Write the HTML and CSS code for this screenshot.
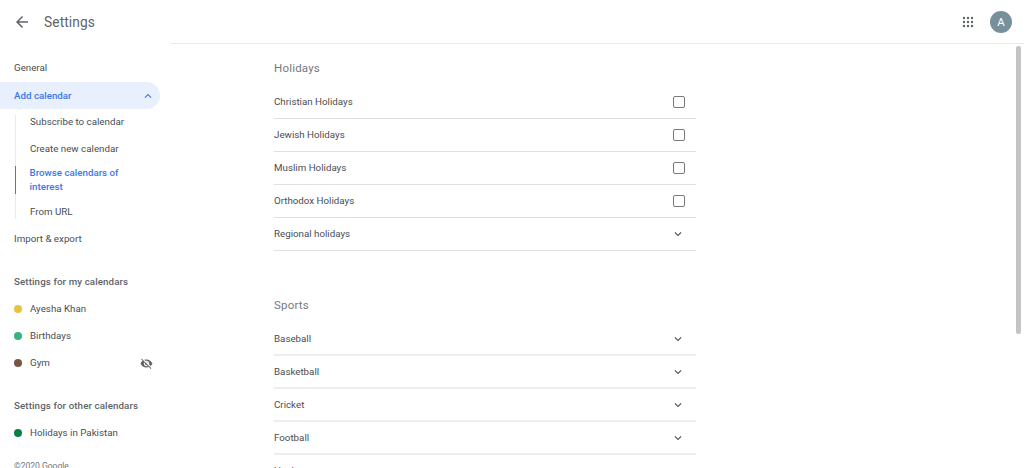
FILE: index.html
```html
<!DOCTYPE html>
<html lang="en">
<head>
<meta charset="utf-8">
<title>Settings</title>
<link rel="stylesheet" href="styles.css">
</head>
<body>
<div class="shell">
  <aside class="sidebar">
    <div class="title-row">
      <svg class="back" viewBox="0 0 24 24" width="18" height="18"><path d="M20 11H7.83l5.59-5.59L12 4l-8 8 8 8 1.41-1.41L7.83 13H20v-2z"/></svg>
      <span class="title">Settings</span>
    </div>
    <nav class="nav">
      <div class="nav-item">General</div>
      <div class="nav-item active">
        <span>Add calendar</span>
        <svg class="caret" viewBox="0 0 24 24" width="14" height="14"><path d="M7.41 15.41 12 10.83l4.59 4.58L18 14l-6-6-6 6z"/></svg>
      </div>
      <div class="sub">
        <div class="sub-item">Subscribe to calendar</div>
        <div class="sub-item">Create new calendar</div>
        <div class="sub-item current">Browse calendars of interest</div>
        <div class="sub-item">From URL</div>
      </div>
      <div class="nav-item">Import &amp; export</div>
      <div class="nav-head">Settings for my calendars</div>
      <div class="nav-item cal"><i class="dot yellow"></i><span>Ayesha Khan</span></div>
      <div class="nav-item cal"><i class="dot green"></i><span>Birthdays</span></div>
      <div class="nav-item cal">
        <i class="dot brown"></i><span>Gym</span>
        <svg class="eye" viewBox="0 0 24 24" width="13" height="13"><path d="M12 7c2.76 0 5 2.24 5 5 0 .65-.13 1.26-.36 1.83l2.92 2.92c1.51-1.26 2.7-2.89 3.43-4.75-1.73-4.39-6-7.5-11-7.5-1.4 0-2.74.25-3.98.7l2.16 2.16C10.74 7.13 11.35 7 12 7zM2 4.27l2.28 2.28.46.46C3.08 8.3 1.78 10.02 1 12c1.73 4.39 6 7.5 11 7.5 1.55 0 3.03-.3 4.38-.84l.42.42L19.73 22 21 20.73 3.27 3 2 4.27zM7.53 9.8l1.55 1.55c-.05.21-.08.43-.08.65 0 1.66 1.34 3 3 3 .22 0 .44-.03.65-.08l1.55 1.55c-.67.33-1.41.53-2.2.53-2.76 0-5-2.24-5-5 0-.79.2-1.53.53-2.2zm4.31-.78l3.15 3.15.02-.16c0-1.66-1.34-3-3-3l-.17.01z"/></svg>
      </div>
      <div class="nav-head">Settings for other calendars</div>
      <div class="nav-item cal"><i class="dot forest"></i><span>Holidays in Pakistan</span></div>
      <div class="copy">©2020 Google</div>
    </nav>
  </aside>
  <main class="main">
    <header class="topbar">
      <svg class="apps" viewBox="0 0 12 12" width="12" height="12"><g><circle cx="2" cy="2" r="1.2"/><circle cx="6" cy="2" r="1.2"/><circle cx="10" cy="2" r="1.2"/><circle cx="2" cy="6" r="1.2"/><circle cx="6" cy="6" r="1.2"/><circle cx="10" cy="6" r="1.2"/><circle cx="2" cy="10" r="1.2"/><circle cx="6" cy="10" r="1.2"/><circle cx="10" cy="10" r="1.2"/></g></svg>
      <div class="avatar">A</div>
    </header>
    <div class="content">
      <section class="group">
        <h2 class="group-title">Holidays</h2>
        <div class="row"><span>Christian Holidays</span><i class="check"></i></div>
        <div class="row"><span>Jewish Holidays</span><i class="check"></i></div>
        <div class="row"><span>Muslim Holidays</span><i class="check"></i></div>
        <div class="row"><span>Orthodox Holidays</span><i class="check"></i></div>
        <div class="row"><span>Regional holidays</span><svg class="chev" viewBox="0 0 24 24" width="14" height="14"><path d="M7.410 8.590 12 13.170l4.590-4.580L18 10l-6 6-6-6z"/></svg></div>
      </section>
      <section class="group soft">
        <h2 class="group-title">Sports</h2>
        <div class="row"><span>Baseball</span><svg class="chev" viewBox="0 0 24 24" width="14" height="14"><path d="M7.410 8.590 12 13.170l4.590-4.580L18 10l-6 6-6-6z"/></svg></div>
        <div class="row"><span>Basketball</span><svg class="chev" viewBox="0 0 24 24" width="14" height="14"><path d="M7.410 8.590 12 13.170l4.590-4.580L18 10l-6 6-6-6z"/></svg></div>
        <div class="row"><span>Cricket</span><svg class="chev" viewBox="0 0 24 24" width="14" height="14"><path d="M7.410 8.590 12 13.170l4.590-4.580L18 10l-6 6-6-6z"/></svg></div>
        <div class="row"><span>Football</span><svg class="chev" viewBox="0 0 24 24" width="14" height="14"><path d="M7.410 8.590 12 13.170l4.590-4.580L18 10l-6 6-6-6z"/></svg></div>
        <div class="row"><span>Hockey</span><svg class="chev" viewBox="0 0 24 24" width="14" height="14"><path d="M7.410 8.590 12 13.170l4.590-4.580L18 10l-6 6-6-6z"/></svg></div>
      </section>
    </div>
  </main>
</div>
<div class="scroll-thumb"></div>
</body>
</html>
```
FILE: styles.css
```css
html, body {
  margin: 0;
  height: 100%;
  overflow: hidden;
  background: #fff;
  font-family: Roboto, "Liberation Sans", sans-serif;
  font-size: 9.75px;
  color: #4a4d51;
}
.shell { display: flex; height: 468px; overflow: hidden; }
.sidebar { width: 171px; flex: none; }
.title-row {
  height: 44px;
  display: flex;
  align-items: center;
  padding-left: 13px;
  gap: 13px;
}
.back { fill: #5f6368; }
.title { font-size: 13.75px; color: #5f6368; letter-spacing: 0.1px; }
.nav { padding-top: 10px; }
.nav-item {
  height: 27px;
  display: flex;
  align-items: center;
  padding-left: 14px;
  width: 146px;
}
.nav-item.active {
  background: #e8f0fe;
  color: #3b78e7;
  font-weight: 500;
  border-radius: 0 13.5px 13.5px 0;
  justify-content: space-between;
  margin-top: 1px;
}
.caret { fill: #3b78e7; margin-right: 5px; }
.sub {
  margin: 6px 0 6px 15px;
  border-left: 1.5px solid #e8eaed;
  width: 135px;
}
.sub-item { padding-left: 14px; line-height: 14px; }
.sub-item + .sub-item { margin-top: 13px; }
.sub-item.current {
  color: #3b78e7;
  font-weight: 500;
  margin: 10px 0 0 -1.5px;
  border-left: 1.5px solid #3b78e7;
  padding-right: 16px;
}
.sub-item.current + .sub-item { margin-top: 11px; }
.nav-head { height: 26px; margin-top: 16px; padding-bottom: 1px; display: flex; align-items: center; padding-left: 14px; font-weight: 500; color: #5f6368; letter-spacing: 0.1px; }
.cal { gap: 8px; }
.dot { width: 8px; height: 8px; border-radius: 50%; flex: none; }
.yellow { background: #e4c441; }
.green { background: #33b679; }
.brown { background: #795548; }
.forest { background: #0b8043; }
.eye { fill: #5f6368; margin: 1px 7px 0 auto; }
.copy { margin: 15px 0 0 14px; font-size: 8.5px; color: #70757a; }
.main { flex: 1; min-width: 0; }
.topbar {
  height: 43px;
  border-bottom: 1px solid #ebebeb;
  display: flex;
  align-items: center;
  justify-content: flex-end;
  gap: 16px;
  padding-right: 12px;
}
.apps { fill: #5f6368; }
.avatar {
  width: 22px;
  height: 22px;
  border-radius: 50%;
  background: #78909c;
  color: #fff;
  font-size: 11.5px;
  display: flex;
  align-items: center;
  justify-content: center;
}
.content { padding-left: 103px; width: 422px; }
.group { margin-bottom: 30px; }
.group-title {
  margin: 0;
  height: 37px;
  padding-top: 5px;
  display: flex;
  align-items: center;
  font-size: 11.5px;
  font-weight: 400;
  color: #757a7e;
  letter-spacing: 0.2px;
}
.row {
  height: 33px;
  box-sizing: border-box;
  border-bottom: 1px solid #e0e0e0;
  padding-bottom: 1px;
  display: flex;
  align-items: center;
  justify-content: space-between;
  padding-right: 11px;
}
.soft .row { border-bottom: 2px solid #eeeeee; padding-bottom: 0; }
.check {
  width: 12px;
  height: 12px;
  border: 1.5px solid #77797c;
  border-radius: 2px;
  box-sizing: border-box;
}
.chev { fill: #4a4d51; }
.scroll-thumb {
  position: absolute;
  left: 1016px;
  top: 46px;
  width: 5px;
  height: 288px;
  background: #c2c4c6;
  border-radius: 2px;
}
```
